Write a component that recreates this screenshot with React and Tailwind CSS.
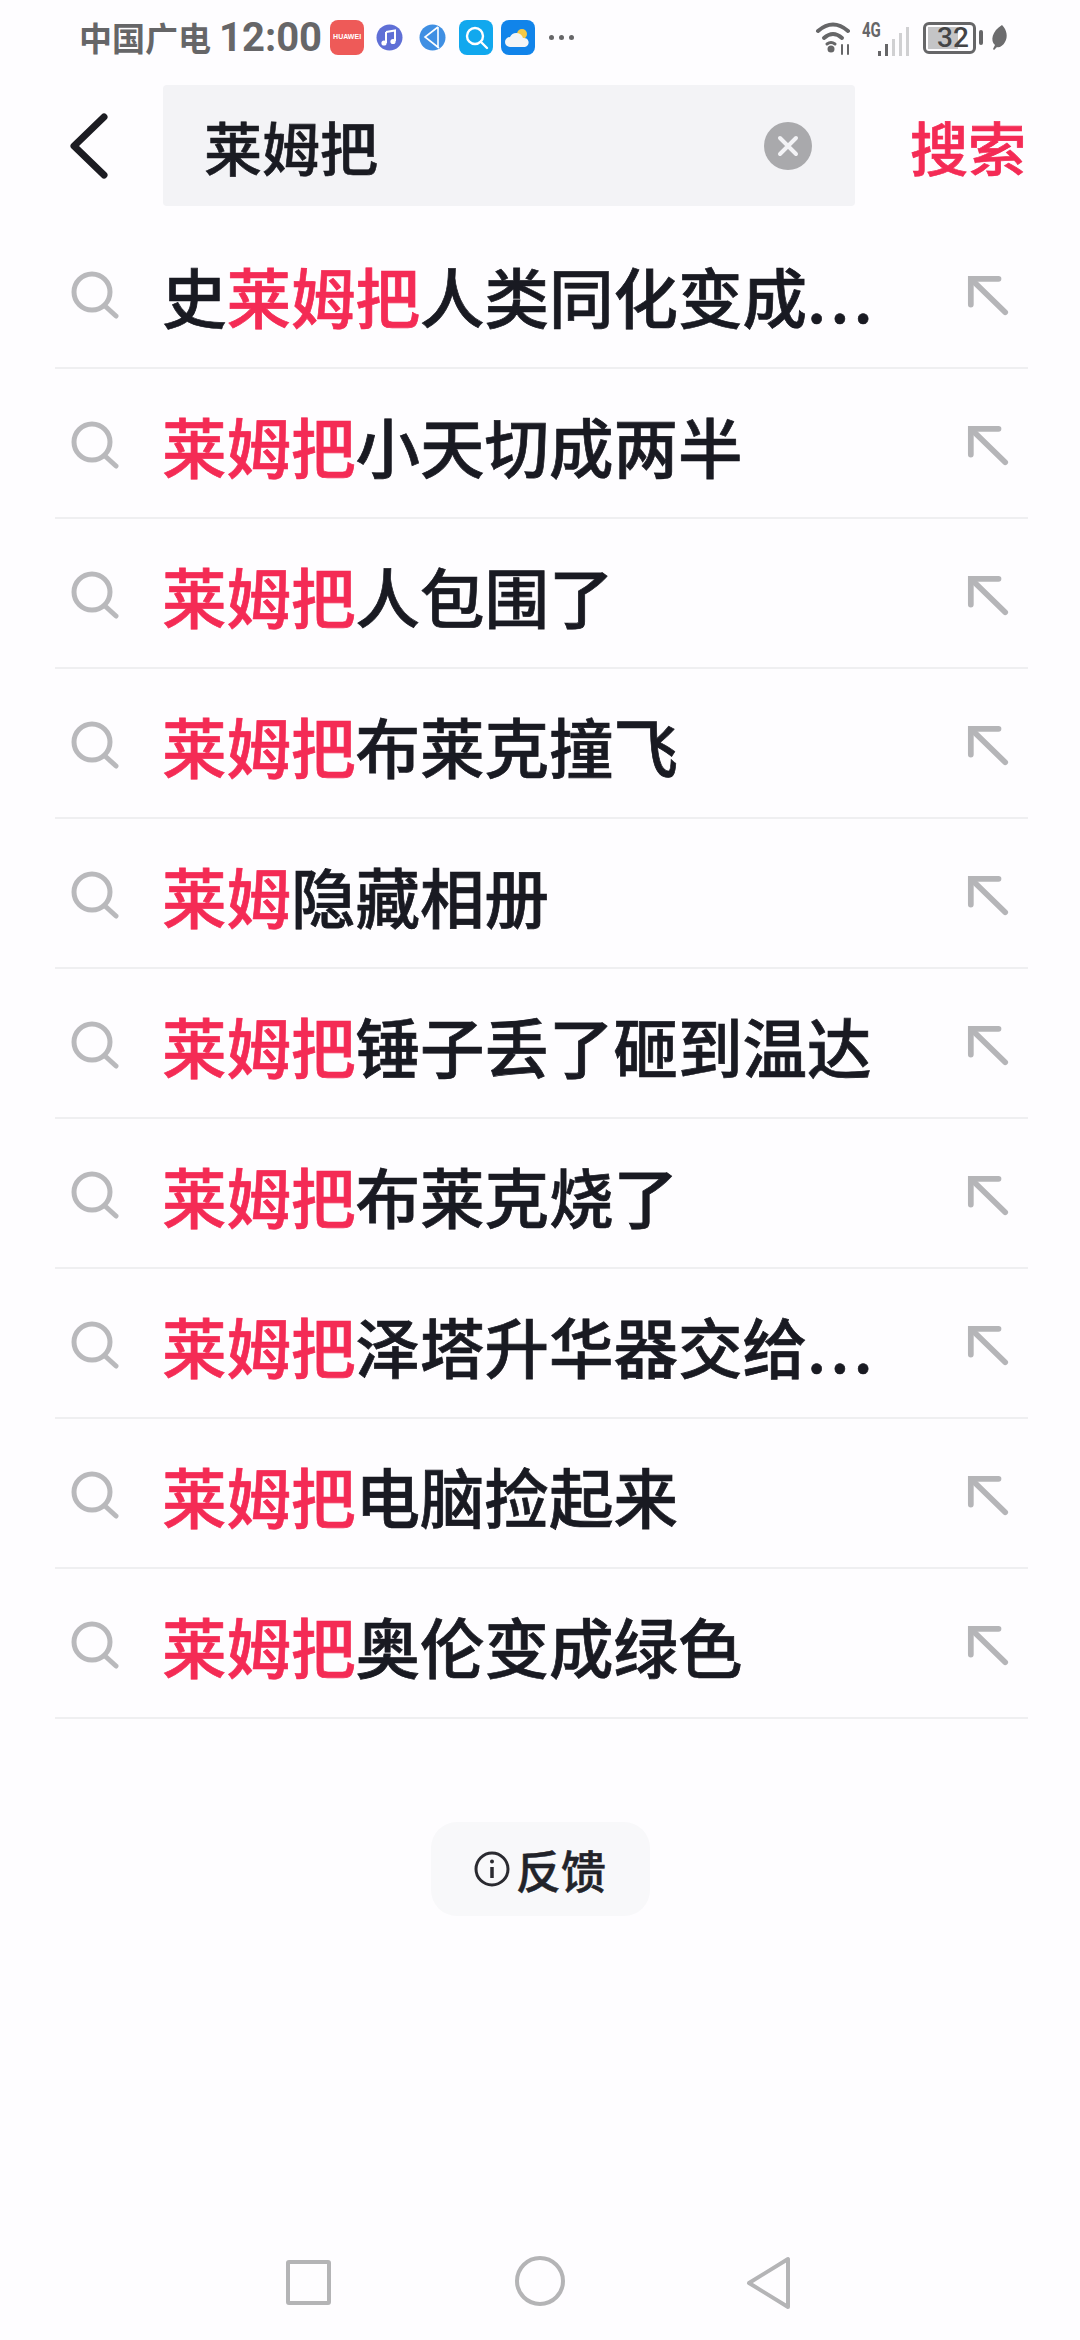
import React from 'react';

const FONT = "font-['Noto_Sans_CJK_SC','Noto_Sans',sans-serif]";

const rows = [
  { pre: '史', hit: '莱姆把', rest: '人类同化变成', more: true },
  { hit: '莱姆把', rest: '小天切成两半' },
  { hit: '莱姆把', rest: '人包围了' },
  { hit: '莱姆把', rest: '布莱克撞飞' },
  { hit: '莱姆', rest: '隐藏相册' },
  { hit: '莱姆把', rest: '锤子丢了砸到温达' },
  { hit: '莱姆把', rest: '布莱克烧了' },
  { hit: '莱姆把', rest: '泽塔升华器交给', more: true },
  { hit: '莱姆把', rest: '电脑捡起来' },
  { hit: '莱姆把', rest: '奥伦变成绿色' },
];

function SearchIcon() {
  return (
    <svg width="48" height="48" viewBox="0 0 48 48" fill="none" stroke="#b9b9bc" strokeWidth="5" strokeLinecap="round">
      <circle cx="21" cy="21" r="18" />
      <path d="M34 35 L45 45" />
    </svg>
  );
}

function FillArrow() {
  return (
    <svg width="42" height="42" viewBox="0 0 44 44" fill="none" stroke="#b5b5b8" strokeWidth="6" strokeLinecap="round">
      <path d="M33 4 H4 V31" />
      <path d="M5 5 L40 39" />
    </svg>
  );
}

function ResultRow({ pre, hit, rest, more }) {
  return (
    <div className="flex h-[150px] items-center border-b-2 border-[#efeff1] pl-4">
      <div className="mt-[3px]">
        <SearchIcon />
      </div>
      <p className="ml-[43px] flex-1 pt-[4px] text-[64.5px] leading-none font-medium whitespace-nowrap text-[#191a22] [-webkit-text-stroke:0.7px]">
        {pre}
        <span className="text-[#f42b55]">{hit}</span>
        {rest}
        {more && <span className="tracking-[4px]">...</span>}
      </p>
      <div className="mt-[6px] mr-[19px]">
        <FillArrow />
      </div>
    </div>
  );
}

function StatusBar() {
  return (
    <div className="flex h-[75px] items-center pl-[79px] pr-[72px] text-[#666668]">
      <span className="text-[33px] leading-none font-bold">中国广电</span>
      <span className="ml-2 font-['Roboto',sans-serif] text-[40px] leading-none font-bold">12:00</span>

      <div className="ml-[8px] flex h-[35px] w-[34px] items-center justify-center rounded-lg bg-[#ee5a58]">
        <span className="font-['Liberation_Sans',sans-serif] text-[7px] font-bold text-white">HUAWEI</span>
      </div>
      <svg className="ml-3" width="27" height="27" viewBox="0 0 27 27">
        <circle cx="13.5" cy="13.5" r="13" fill="#5f6fd6" />
        <path d="M10 8 L19 6.5 V17" fill="none" stroke="#fff" strokeWidth="2" />
        <path d="M10 8 V19" fill="none" stroke="#fff" strokeWidth="2" />
        <circle cx="8" cy="19" r="2.6" fill="#fff" />
        <circle cx="17" cy="17.5" r="2.6" fill="#fff" />
      </svg>
      <svg className="ml-[16px]" width="27" height="27" viewBox="0 0 27 27">
        <circle cx="13.5" cy="13.5" r="13" fill="#3f8fe3" />
        <path d="M19 3 L6 13 L20 24 M19 3 V24" fill="none" stroke="#fff" strokeWidth="1.6" />
      </svg>
      <div className="ml-[13px] flex h-[35px] w-[34px] items-center justify-center rounded-lg bg-[#11a8ee]">
        <svg width="25" height="25" viewBox="0 0 25 25" fill="none" stroke="#fff" strokeWidth="2.4" strokeLinecap="round">
          <circle cx="11" cy="11" r="8" />
          <path d="M17 17 L23 23" />
        </svg>
      </div>
      <div className="ml-2 flex h-[35px] w-[34px] items-center justify-center rounded-lg bg-[#1184ea]">
        <svg width="28" height="26" viewBox="0 0 28 26">
          <circle cx="18" cy="9" r="5" fill="#f6c945" />
          <path d="M6 22 a5 5 0 0 1 0 -10 a7 7 0 0 1 13 1 a4.5 4.5 0 0 1 2 9 Z" fill="#f3f5f7" />
        </svg>
      </div>
      <div className="ml-[14px] flex gap-[5px]">
        <span className="size-[5px] rounded-full bg-[#666668]" />
        <span className="size-[5px] rounded-full bg-[#666668]" />
        <span className="size-[5px] rounded-full bg-[#666668]" />
      </div>

      <div className="ml-auto flex items-center">
        <svg width="40" height="34" viewBox="0 0 40 34" fill="none" stroke="#666668" strokeWidth="4" strokeLinecap="round">
          <path d="M3 10 Q18 -3 33 10" />
          <path d="M9 17 Q18 9 27 17" />
          <circle cx="16" cy="28" r="3.5" fill="#666668" stroke="none" />
          <path d="M12 23 Q16 20 20 23" strokeWidth="3" />
          <path d="M27 24 V33 M33 24 V33" strokeWidth="2" />
        </svg>
        <div className="relative ml-[2px] flex h-[36px] w-[54px] items-end gap-[4px] pl-[21px]">
          <span className="absolute top-0 left-[5px] origin-top-left scale-x-75 font-['Roboto',sans-serif] text-[20px] leading-none font-bold">4G</span>
          <span className="h-[5px] w-[3px] bg-[#666668]" />
          <span className="h-[12px] w-[3px] bg-[#666668]" />
          <span className="h-[17px] w-[3px] bg-[#d0d0d2]" />
          <span className="h-[23px] w-[3px] bg-[#d0d0d2]" />
          <span className="h-[29px] w-[3px] bg-[#d0d0d2]" />
        </div>
        <div className="relative ml-[12px] flex h-[32px] w-[53px] items-center rounded-md border-[3px] border-[#666668] p-[2px]">
          <div className="h-full w-[30px] bg-[#c4c4c6]" />
          <span className="absolute top-1/2 left-[11px] -translate-y-1/2 font-['Roboto',sans-serif] text-[28px] leading-none font-medium text-[#444446]">
            32
          </span>
        </div>
        <span className="ml-[3px] h-[15px] w-[4px] rounded-sm bg-[#666668]" />
        <svg className="ml-[7px]" width="18" height="27" viewBox="0 0 18 27">
          <path d="M12 1 C17 6 18 13 15 18 C13 22 9 24 7 23 L4 26 L3 25 L5 21 C0 17 2 7 12 1 Z" fill="#6c6c6e" />
        </svg>
      </div>
    </div>
  );
}

export default function App() {
  return (
    <div className={`${FONT} flex min-h-screen w-[1080px] flex-col bg-[#fefdff]`}>
      <StatusBar />

      {/* search header */}
      <div className="mt-[10px] flex h-[121px] items-center">
        <svg className="ml-[69px]" width="40" height="66" viewBox="0 0 40 66" fill="none" stroke="#1c1c22" strokeWidth="7" strokeLinecap="round" strokeLinejoin="round">
          <path d="M35 4 L5 33 L35 62" />
        </svg>
        <div className="ml-[54px] flex h-full w-[692px] items-center rounded-sm bg-[#f3f3f6] pl-[41px] pr-[43px]">
          <span className="flex-1 text-[58px] leading-none font-medium text-[#1a1b22] [-webkit-text-stroke:0.6px]">莱姆把</span>
          <div className="flex size-12 items-center justify-center rounded-full bg-[#a9a9ac]">
            <svg width="24" height="24" viewBox="0 0 24 24" stroke="#f3f3f6" strokeWidth="4" strokeLinecap="round">
              <path d="M4 4 L20 20 M20 4 L4 20" />
            </svg>
          </div>
        </div>
        <span className="ml-[55px] text-[58px] leading-none font-medium text-[#f42b55] [-webkit-text-stroke:0.7px]">搜索</span>
      </div>

      <div className="mt-[13px] mr-[52px] ml-[55px]">
        {rows.map((row, i) => (
          <ResultRow key={i} {...row} />
        ))}
      </div>

      <div className="mt-[103px] flex justify-center">
        <div className="flex h-[94px] w-[219px] items-center justify-center gap-[6px] rounded-[26px] bg-[#f8f8fa]">
          <svg width="36" height="36" viewBox="0 0 36 36" fill="none" stroke="#2a2a30" strokeWidth="3">
            <circle cx="18" cy="18" r="16" />
            <path d="M18 16 V27" strokeWidth="3.5" />
            <circle cx="18" cy="10.5" r="2" fill="#2a2a30" stroke="none" />
          </svg>
          <span className="text-[45px] leading-none font-medium text-[#22232a] [-webkit-text-stroke:0.5px]">反馈</span>
        </div>
      </div>

      <div className="mt-auto flex h-[84px] items-start pl-[286px]">
        <div className="mt-[4px] size-[45px] rounded-[3px] border-[4px] border-[#b4b4b6]" />
        <div className="ml-[184px] size-[50px] rounded-full border-[4px] border-[#b4b4b6]" />
        <svg className="ml-[181px]" width="46" height="54" viewBox="0 0 46 54" fill="none" stroke="#b4b4b6" strokeWidth="4" strokeLinejoin="round">
          <path d="M42 3 V51 L3 27 Z" />
        </svg>
      </div>
    </div>
  );
}
